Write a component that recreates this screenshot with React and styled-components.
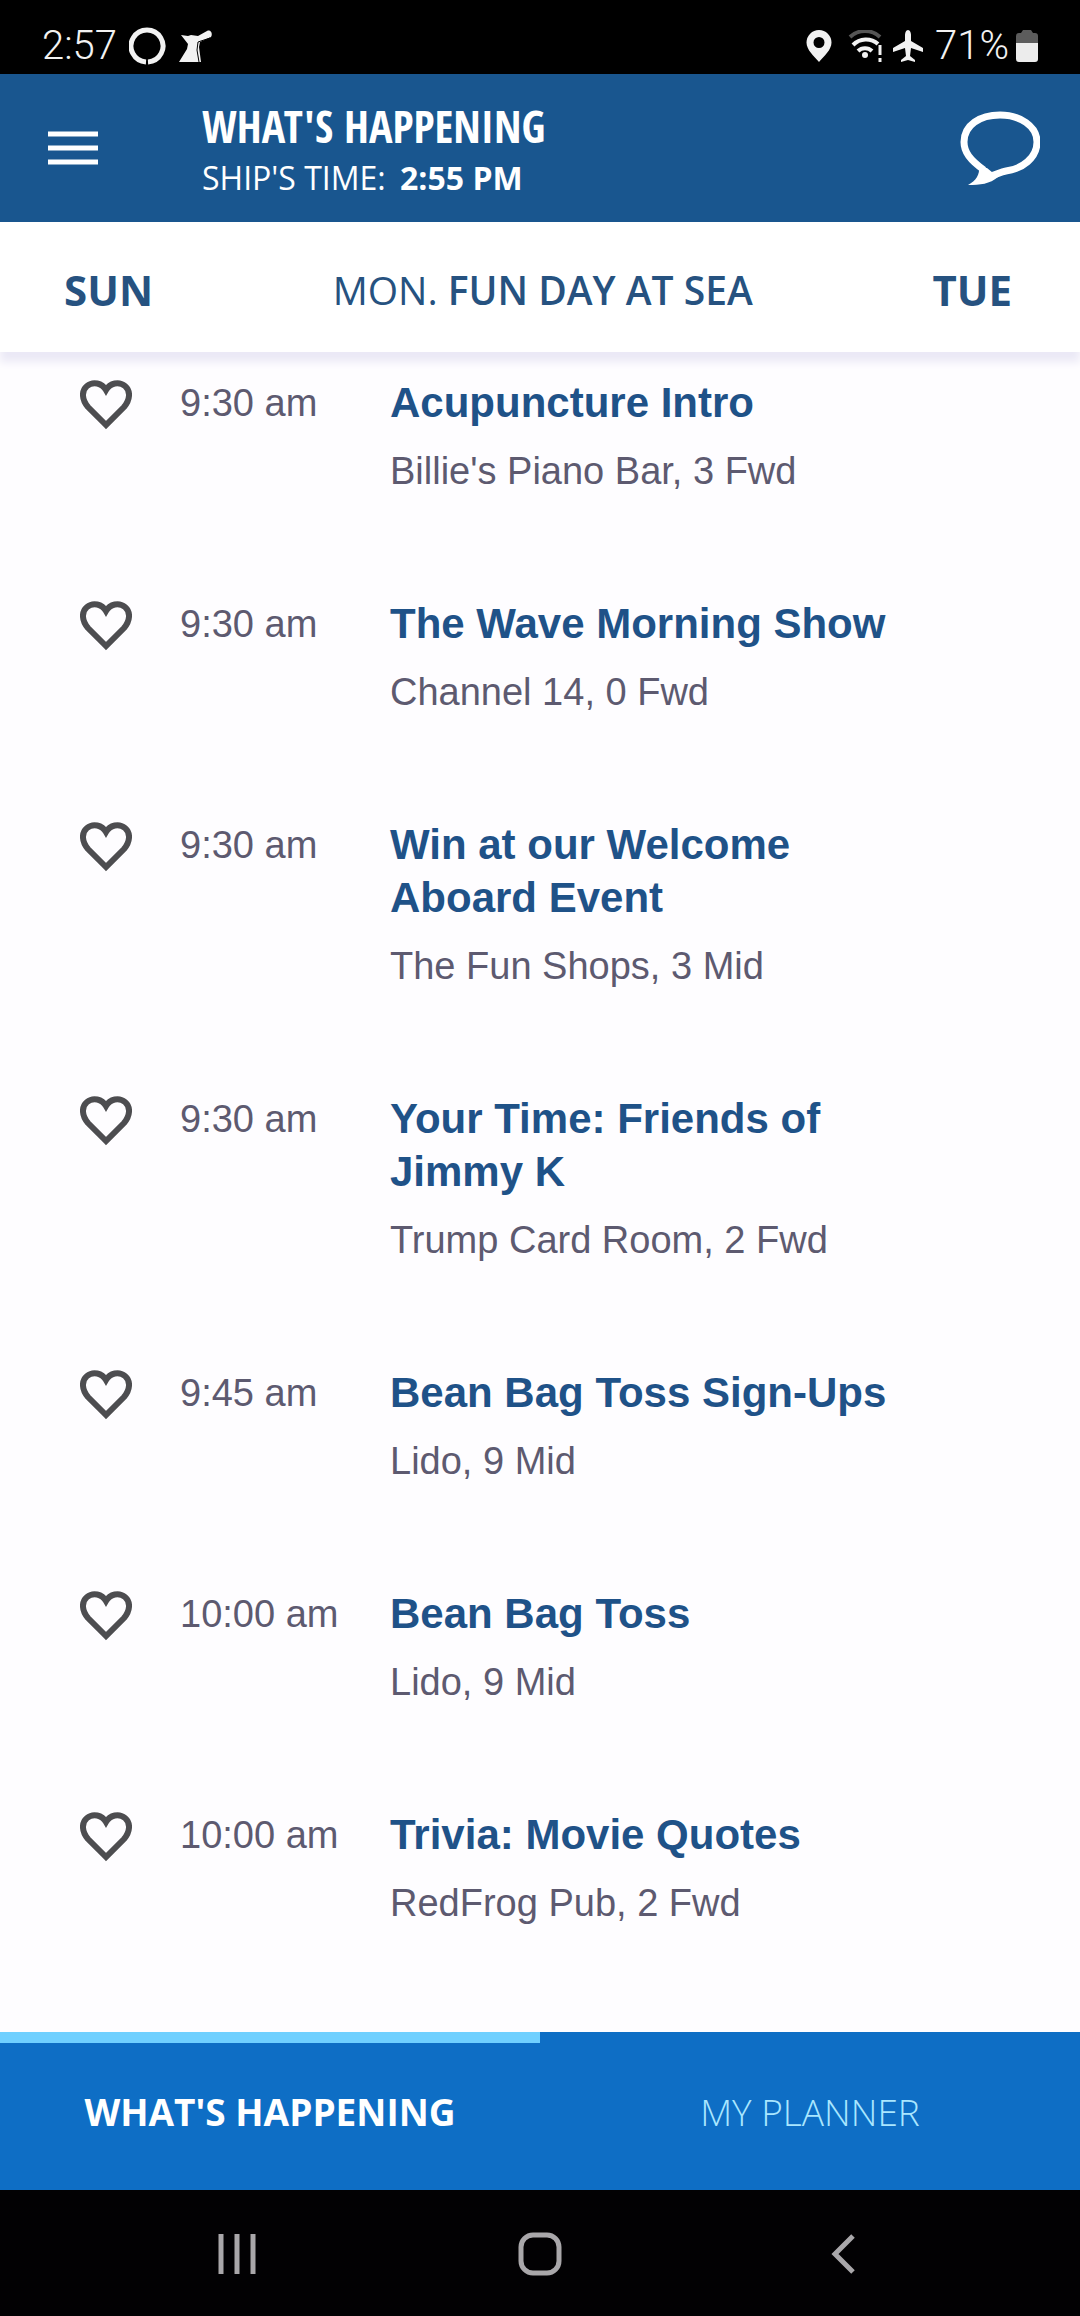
import React, { useState } from 'react'
import styled, { createGlobalStyle } from 'styled-components'

const events = [
    { id: 1, time: '9:30 am', title: 'Acupuncture Intro', place: "Billie's Piano Bar, 3 Fwd" },
    { id: 2, time: '9:30 am', title: 'The Wave Morning Show', place: 'Channel 14, 0 Fwd' },
    { id: 3, time: '9:30 am', title: 'Win at our Welcome Aboard Event', place: 'The Fun Shops, 3 Mid' },
    { id: 4, time: '9:30 am', title: 'Your Time: Friends of Jimmy K', place: 'Trump Card Room, 2 Fwd' },
    { id: 5, time: '9:45 am', title: 'Bean Bag Toss Sign-Ups', place: 'Lido, 9 Mid' },
    { id: 6, time: '10:00 am', title: 'Bean Bag Toss', place: 'Lido, 9 Mid' },
    { id: 7, time: '10:00 am', title: 'Trivia: Movie Quotes', place: 'RedFrog Pub, 2 Fwd' },
]

function StatusBar() {
    return (
        <Status>
            <StatusGroup $gap="12px">
                <span>2:57</span>
                <svg width="38" height="38" viewBox="0 0 38 38" fill="none" stroke="#f2f2f2">
                    <path d="M17 35A16 16 0 1 1 19 35" strokeWidth="5" />
                </svg>
                <svg width="34" height="32" viewBox="0 0 34 32" fill="#f2f2f2">
                    <path d="M2 5l7 1 3-1 7 1 9-5c4-2 6 3 4 6l-11 5-1 5 2 15H0l8-13 1-5z" />
                    <path d="M31 8l-12 4-1 8 2 12" fill="none" stroke="#000" strokeWidth="1" />
                </svg>
            </StatusGroup>
            <StatusGroup $gap="7px">
                <svg width="26" height="32" viewBox="0 0 26 32" fill="#f2f2f2">
                    <path fillRule="evenodd" d="M13 0a12.500 12.500 0 0 1 12.500 12.500C25.500 20 18 26 13 32 8 26 .5 20 .5 12.500A12.500 12.500 0 0 1 13 0zm0 7a5.500 5.500 0 1 0 0 11 5.500 5.500 0 0 0 0-11z" />
                </svg>
                <svg width="46" height="32" viewBox="0 0 46 32" fill="none">
                    <path d="M11 7a22 22 0 0 1 30 0" stroke="#555" strokeWidth="4" />
                    <path d="M14 15a18 18 0 0 1 25-1" stroke="#f2f2f2" strokeWidth="4" />
                    <path d="M19 21a10 10 0 0 1 14 0" stroke="#f2f2f2" strokeWidth="4" />
                    <circle cx="26" cy="25" r="3" fill="#f2f2f2" />
                    <path d="M41 15v10M41 28v4" stroke="#f2f2f2" strokeWidth="3" />
                </svg>
                <svg width="36" height="32" viewBox="0 0 36 32" fill="#f2f2f2">
                    <path d="M16 0c2 0 3 3 3 5v6l12 7v4l-12-4-1 8 5 4v2l-7-2-7 2v-2l5-4-1-8-12 4v-4l12-7V5c0-2 1-5 3-5z" />
                </svg>
                <span>71%</span>
                <svg width="22" height="32" viewBox="0 0 22 32">
                    <path d="M5 3l2-3h8l2 3h2q3 0 3 3v8H0V6q0-3 3-3z" fill="#5c5c5c" />
                    <path d="M0 13h22v16q0 3-3 3H3q-3 0-3-3z" fill="#ececec" />
                </svg>
            </StatusGroup>
        </Status>
    )
}

function Event({ event }) {
    const [liked, setLiked] = useState(false)

    return (
        <EventRow>
            <HeartButton aria-label={`Add ${event.title} to planner`} aria-pressed={liked} onClick={() => setLiked(!liked)}>
                <svg width="52" height="50" viewBox="0 0 52 50" fill={liked ? '#4d4d50' : 'none'} stroke="#4d4d50" strokeWidth="6">
                    <path d="M26 45L8 27C2 20 1 11 7 6 13 1 22 3 26 10 30 3 39 1 45 6 51 11 50 20 44 27z" />
                </svg>
            </HeartButton>
            <Time>{event.time}</Time>
            <Details>
                <EventTitle>{event.title}</EventTitle>
                <Place>{event.place}</Place>
            </Details>
        </EventRow>
    )
}

function App() {
    const [tab, setTab] = useState('happening')

    return (
        <Container>
            <GlobalStyle />
            <StatusBar />
            <Header>
                <MenuButton aria-label="Menu">
                    <svg width="50" height="34" viewBox="0 0 50 34" stroke="#fff" strokeWidth="5">
                        <path d="M0 3h50M0 17h50M0 31h50" />
                    </svg>
                </MenuButton>
                <Heading>
                    <PageTitle>WHAT'S HAPPENING</PageTitle>
                    <ShipTime>SHIP'S TIME: <strong>2:55 PM</strong></ShipTime>
                </Heading>
                <ChatButton aria-label="Chat">
                    <svg width="80" height="76" viewBox="0 0 80 76">
                        <path d="M24 60C10 50 4 42 4 32 4 15 20 5 40 5S77 16 77 32C77 48 62 59 46 61 40 62 36 65 30 66" fill="none" stroke="#fff" strokeWidth="7" />
                        <path d="M19 57C20 64 16 71 8 75 20 75 30 74 38 67L27 58z" fill="#fff" />
                    </svg>
                </ChatButton>
            </Header>
            <DayBar>
                <DayButton>SUN</DayButton>
                <CurrentDay>MON. <b>FUN DAY AT SEA</b></CurrentDay>
                <DayButton>TUE</DayButton>
            </DayBar>
            <EventList>
                {events.map((event) => (
                    <Event key={event.id} event={event} />
                ))}
            </EventList>
            <Tabs>
                <Tab $active={tab === 'happening'} onClick={() => setTab('happening')}>WHAT'S HAPPENING</Tab>
                <Tab $active={tab === 'planner'} onClick={() => setTab('planner')}>MY PLANNER</Tab>
            </Tabs>
            <SystemNav>
                <NavButton aria-label="Recent apps">
                    <svg width="38" height="40" viewBox="0 0 38 40" stroke="#a9a7aa" strokeWidth="5">
                        <path d="M3 0v40M19 0v40M35 0v40" />
                    </svg>
                </NavButton>
                <NavButton aria-label="Home">
                    <svg width="44" height="44" viewBox="0 0 44 44" fill="none" stroke="#a9a7aa" strokeWidth="5">
                        <rect x="3" y="3" width="38" height="38" rx="12" />
                    </svg>
                </NavButton>
                <NavButton aria-label="Back">
                    <svg width="24" height="40" viewBox="0 0 24 40" fill="none" stroke="#a9a7aa" strokeWidth="5">
                        <path d="M22 2L4 20l18 18" />
                    </svg>
                </NavButton>
            </SystemNav>
        </Container>
    )
}

export default App


const GlobalStyle = createGlobalStyle`
    * {
        box-sizing: border-box;
    }
    body {
        margin: 0;
        background: #fefdff;
    }
    button {
        padding: 0;
        border: 0;
        background: none;
        cursor: pointer;
    }
    svg {
        display: block;
        flex-shrink: 0;
    }
`
const Container = styled.div`
    min-height: 100vh;
    display: flex;
    flex-direction: column;
    font-family: "Liberation Sans", sans-serif;
`
const Status = styled.div`
    height: 74px;
    padding: 18px 42px 0;
    display: flex;
    align-items: center;
    justify-content: space-between;
    background: #000;
    color: #f2f2f2;
    font-family: Roboto, sans-serif;
    font-size: 40px;
    line-height: 48px;
`
const StatusGroup = styled.div`
    display: flex;
    align-items: center;
    gap: ${(props) => props.$gap};
    font-weight: 300;
`
const Header = styled.header`
    height: 148px;
    padding: 0 40px 0 48px;
    display: flex;
    align-items: center;
    background: #19568f;
    color: #fff;
    z-index: 2;
`
const MenuButton = styled.button`
    width: 154px;
`
const Heading = styled.div`
    flex: 1;
`
const PageTitle = styled.h1`
    margin: 0;
    font-family: "Open Sans Condensed", "Roboto Condensed", "Liberation Sans Narrow", sans-serif;
    font-size: 44px;
    font-weight: 800;
    line-height: 60px;
`
const ShipTime = styled.p`
    margin: 0;
    font-family: "Open Sans", sans-serif;
    font-size: 32px;
    line-height: 44px;

    strong {
        margin-left: 6px;
    }
`
const ChatButton = styled.button`
    flex-shrink: 0;
`
const DayBar = styled.nav`
    height: 130px;
    padding: 4px 68px 0 64px;
    display: flex;
    align-items: center;
    justify-content: space-between;
    background: #fff;
    box-shadow: 0 10px 8px #ebe9f6;
    color: #265280;
    font-family: "Open Sans", sans-serif;
    font-size: 39px;
    z-index: 1;
`
const DayButton = styled.button`
    color: inherit;
    font-family: inherit;
    font-size: 42px;
    font-weight: bold;
`
const CurrentDay = styled.span`
    b {
        font-weight: 600;
    }
`
const EventList = styled.ul`
    flex: 1;
    margin: 0;
    padding: 24px 80px 0;
    display: flex;
    flex-direction: column;
    gap: 102px;
    list-style: none;
`
const EventRow = styled.li`
    display: flex;
    align-items: flex-start;
`
const HeartButton = styled.button`
    width: 100px;
    padding-top: 4px;
`
const Time = styled.span`
    width: 210px;
    color: #5d5a70;
    font-size: 38px;
    line-height: 54px;
`
const Details = styled.div`
    flex: 1;
    max-width: 520px;
`
const EventTitle = styled.h2`
    margin: 0 0 18px;
    color: #1f5288;
    font-size: 42px;
    font-weight: bold;
    line-height: 53px;
`
const Place = styled.p`
    margin: 0;
    color: #5d5a70;
    font-size: 38px;
    line-height: 48px;
`
const Tabs = styled.div`
    height: 158px;
    display: flex;
    background: #0e6ec5;
`
const Tab = styled.button`
    flex: 1;
    border-top: 11px solid ${(props) => (props.$active ? '#70d0ff' : 'transparent')};
    padding-bottom: 10px;
    color: ${(props) => (props.$active ? '#fff' : '#a9e6ff')};
    font-family: "Open Sans", sans-serif;
    font-size: 37px;
    font-weight: ${(props) => (props.$active ? 'bold' : 300)};
`
const SystemNav = styled.div`
    height: 126px;
    padding: 2px 86px 0;
    display: flex;
    align-items: center;
    background: #020103;
`
const NavButton = styled.button`
    flex: 1;
    display: grid;
    place-items: center;
`
